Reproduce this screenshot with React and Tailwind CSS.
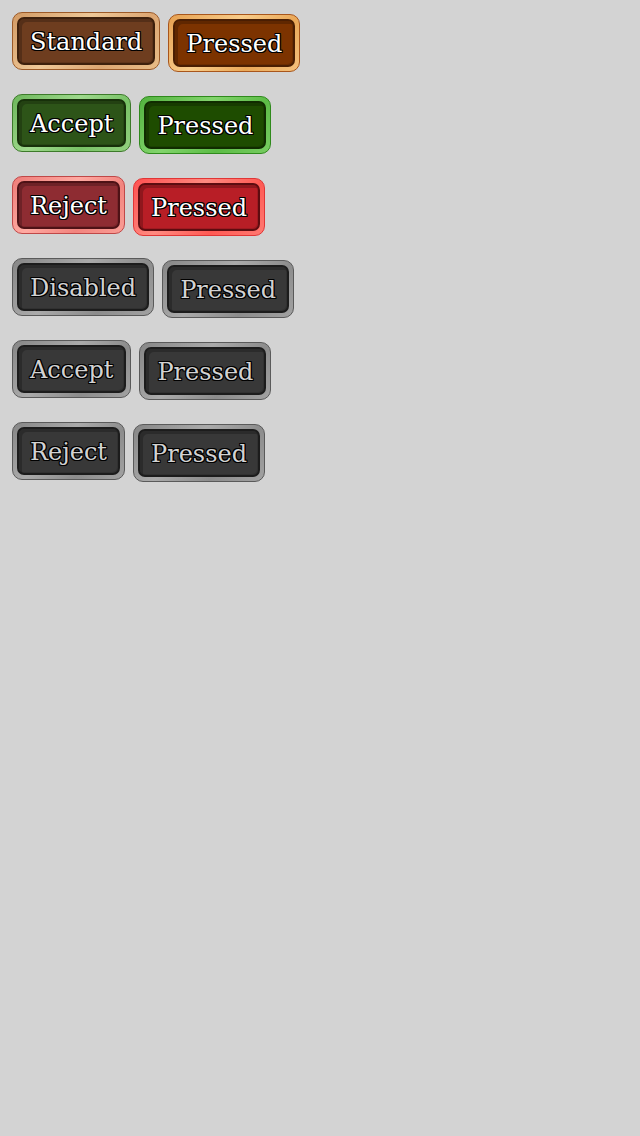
import React from "react";

const styles = {
  standard: {
    outer: "border-[#9c5a28] bg-[linear-gradient(135deg,#d29a64,#efc898_40%,#dca672_70%,#e9bd88)]",
    inner: "border-[#3e200c] bg-[#6e3d1f]",
    text: "text-white",
  },
  standardP: {
    outer: "border-[#a8561c] bg-[linear-gradient(135deg,#e6a050,#f8cc8a_40%,#eaa858_70%,#f4c07c)]",
    inner: "border-[#4a1e02] bg-[#7c3300]",
    text: "text-white",
  },
  accept: {
    outer: "border-[#3d7a2a] bg-[linear-gradient(135deg,#6cb65a,#9ed88c_40%,#78c266_70%,#92d07e)]",
    inner: "border-[#17300a] bg-[#2d5418]",
    text: "text-white",
  },
  acceptP: {
    outer: "border-[#2f8a1c] bg-[linear-gradient(135deg,#52b23e,#82d46c_40%,#5cbc46_70%,#78cc62)]",
    inner: "border-[#102c00] bg-[#1e4c00]",
    text: "text-white",
  },
  reject: {
    outer: "border-[#c04848] bg-[linear-gradient(135deg,#ee7c78,#ffaaa2_40%,#f2847e_70%,#fa9e96)]",
    inner: "border-[#4e1216] bg-[#8e2c32]",
    text: "text-white",
  },
  rejectP: {
    outer: "border-[#e03636] bg-[linear-gradient(135deg,#ff5050,#ff8a80_40%,#ff5a54_70%,#ff7a72)]",
    inner: "border-[#5e0c10] bg-[#b81e26]",
    text: "text-white",
  },
  disabled: {
    outer: "border-[#5a5a5a] bg-[linear-gradient(135deg,#868686,#aaaaaa_40%,#8c8c8c_70%,#a2a2a2)]",
    inner: "border-[#1c1c1c] bg-[#383838]",
    text: "text-[#d2d2d2]",
  },
};

function Btn({ label, v, pressed }) {
  const s = styles[v];
  return (
    <div
      className={`rounded-[10px] border p-[4px] ${s.outer} ${pressed ? "translate-y-[2px]" : ""}`}
    >
      <div
        className={`h-[48px] rounded-[7px] border-2 px-[11px] pt-[2px] flex items-center shadow-[inset_3px_3px_0_rgba(0,0,0,0.22),inset_-1px_-1px_0_rgba(0,0,0,0.12)] ${s.inner}`}
      >
        <span
          className={`${s.text} text-[24px] leading-none whitespace-nowrap [font-family:'DejaVu_Serif',serif] [text-shadow:1px_0_0_#000,-1px_0_0_#000,0_1px_0_#000,0_-1px_0_#000,1px_1px_0_#000,-1px_-1px_0_#000,1px_-1px_0_#000,-1px_1px_0_#000]`}
        >
          {label}
        </span>
      </div>
    </div>
  );
}

export default function App() {
  const rows = [
    ["Standard", "standard", "standardP"],
    ["Accept", "accept", "acceptP"],
    ["Reject", "reject", "rejectP"],
    ["Disabled", "disabled", "disabled"],
    ["Accept", "disabled", "disabled"],
    ["Reject", "disabled", "disabled"],
  ];
  return (
    <div className="min-h-[1136px] w-[640px] bg-[#d3d3d3] p-[12px] flex flex-col gap-[24px]">
      {rows.map(([label, a, b], i) => (
        <div key={i} className="flex items-start gap-[8px]">
          <Btn label={label} v={a} />
          <Btn label="Pressed" v={b} pressed />
        </div>
      ))}
    </div>
  );
}
